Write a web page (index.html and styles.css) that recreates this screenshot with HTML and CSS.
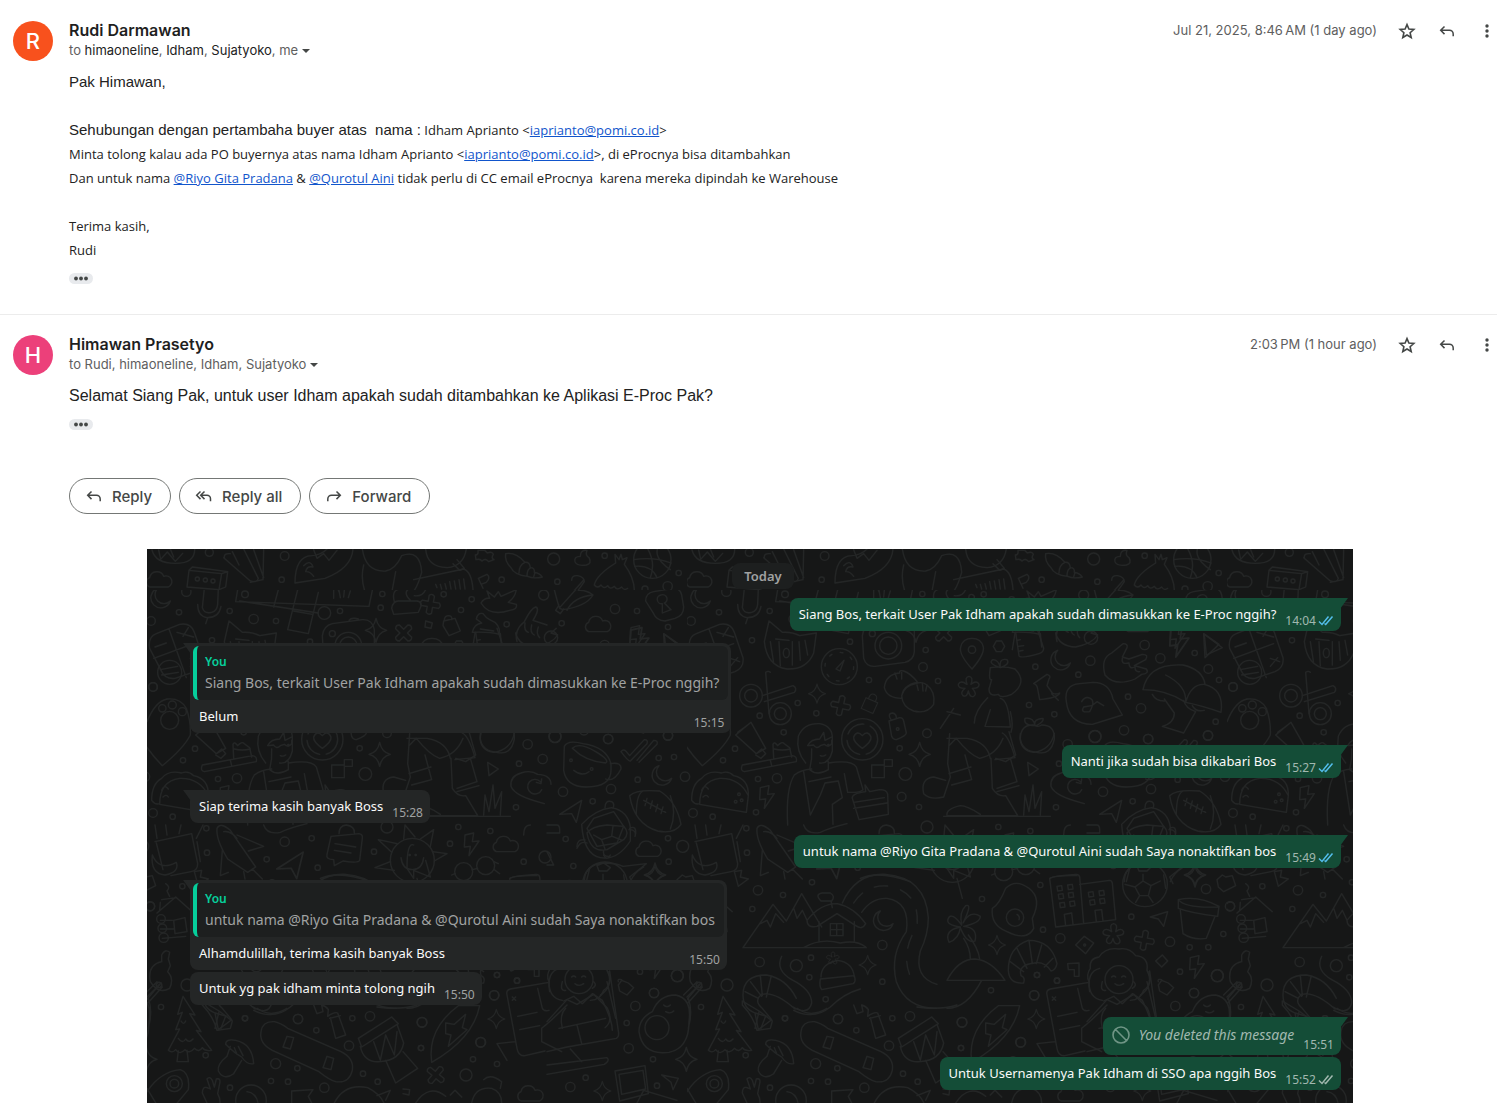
FILE: index.html
```html
<!DOCTYPE html>
<html lang="id">
<head>
    <meta charset="UTF-8">
    <meta name="viewport" content="width=device-width, initial-scale=1.0">
    <title>E-Proc Buyer</title>
    <link rel="stylesheet" href="styles.css">
</head>
<body>

<!-- shared icons -->
<svg class="sprite" aria-hidden="true">
    <symbol id="icon-star" viewBox="0 0 20 20">
        <path d="M10 3.6l1.9 4.5 4.9.4-3.7 3.2 1.1 4.8L10 14l-4.2 2.5 1.1-4.8-3.7-3.2 4.9-.4z" fill="none" stroke="currentColor" stroke-width="1.6"/>
    </symbol>
    <symbol id="icon-reply" viewBox="0 0 20 20">
        <path d="M7.5 5.5L3.7 9.3l3.8 3.8M4 9.3h8.5a3.7 3.7 0 0 1 3.7 3.7v2.3" fill="none" stroke="currentColor" stroke-width="1.5"/>
    </symbol>
    <symbol id="icon-reply-all" viewBox="0 0 20 20">
        <path d="M6.5 5.5L2.7 9.3l3.8 3.8M10.500 5.5L6.7 9.3l3.8 3.8M7 9.3h6a3.5 3.5 0 0 1 3.5 3.5v2.5" fill="none" stroke="currentColor" stroke-width="1.5"/>
    </symbol>
    <symbol id="icon-forward" viewBox="0 0 20 20">
        <path d="M12.500 5.5l3.8 3.8-3.8 3.8M16 9.3H7.5a3.7 3.7 0 0 0-3.7 3.7v2.3" fill="none" stroke="currentColor" stroke-width="1.5"/>
    </symbol>
    <symbol id="icon-more" viewBox="0 0 20 20">
        <g fill="currentColor"><circle cx="10" cy="5" r="1.7"/><circle cx="10" cy="10" r="1.7"/><circle cx="10" cy="15" r="1.7"/></g>
    </symbol>
    <symbol id="icon-dots" viewBox="0 0 24 11">
        <g fill="currentColor"><circle cx="7" cy="5.5" r="1.9"/><circle cx="12" cy="5.5" r="1.9"/><circle cx="17" cy="5.5" r="1.9"/></g>
    </symbol>
    <symbol id="icon-ticks" viewBox="0 0 16 11">
        <path d="M1 6.5l3 3L10.500 1.5M6.5 8.5l1.2 1L14.500 1.5" fill="none" stroke="currentColor" stroke-width="1.5"/>
    </symbol>
    <symbol id="icon-blocked" viewBox="0 0 18 18">
        <path d="M9 1a8 8 0 1 0 0 16a8 8 0 0 0 0-16zM3.3 3.3l11.400 11.400" fill="none" stroke="currentColor" stroke-width="1.6"/>
    </symbol>
</svg>

<main class="thread">
    <article class="mail">
        <div class="avatar avatar-orange">R</div>
        <div class="mail-main">
            <header class="mail-header">
                <div>
                    <h2>Rudi Darmawan</h2>
                    <p class="recipients">to <span class="strong">himaoneline</span>, <span class="strong">Idham</span>, <span class="strong">Sujatyoko</span>, me <button class="caret" aria-label="Show details"></button></p>
                </div>
                <div class="mail-tools">
                    <time>Jul 21, 2025, 8:46&#8239;AM (1 day ago)</time>
                    <button class="icon-button" aria-label="Star"><svg><use href="#icon-star"/></svg></button>
                    <button class="icon-button" aria-label="Reply"><svg><use href="#icon-reply"/></svg></button>
                    <button class="icon-button" aria-label="More"><svg><use href="#icon-more"/></svg></button>
                </div>
            </header>
            <div class="mail-body">
                <p class="arial">Pak Himawan,</p>
                <p><br></p>
                <p><span class="arial">Sehubungan dengan pertambaha buyer atas&nbsp; nama :</span> Idham Aprianto &lt;<a href="mailto:iaprianto@pomi.co.id">iaprianto@pomi.co.id</a>&gt;</p>
                <p>Minta tolong kalau ada PO buyernya atas nama Idham Aprianto &lt;<a href="mailto:iaprianto@pomi.co.id">iaprianto@pomi.co.id</a>&gt;, di eProcnya bisa ditambahkan</p>
                <p>Dan untuk nama <a href="#">@Riyo Gita Pradana</a> &amp; <a href="#">@Qurotul Aini</a> tidak perlu di CC email eProcnya&nbsp; karena mereka dipindah ke Warehouse</p>
                <p><br></p>
                <p>Terima kasih,</p>
                <p>Rudi</p>
            </div>
            <button class="trimmed" aria-label="Show trimmed content"><svg><use href="#icon-dots"/></svg></button>
        </div>
    </article>

    <article class="mail">
        <div class="avatar avatar-pink">H</div>
        <div class="mail-main">
            <header class="mail-header">
                <div>
                    <h2>Himawan Prasetyo</h2>
                    <p class="recipients">to Rudi, himaoneline, Idham, Sujatyoko <button class="caret" aria-label="Show details"></button></p>
                </div>
                <div class="mail-tools">
                    <time>2:03&#8239;PM (1 hour ago)</time>
                    <button class="icon-button" aria-label="Star"><svg><use href="#icon-star"/></svg></button>
                    <button class="icon-button" aria-label="Reply"><svg><use href="#icon-reply"/></svg></button>
                    <button class="icon-button" aria-label="More"><svg><use href="#icon-more"/></svg></button>
                </div>
            </header>
            <div class="mail-body">
                <p class="arial large">Selamat Siang Pak, untuk user Idham apakah sudah ditambahkan ke Aplikasi E-Proc Pak?</p>
            </div>
            <button class="trimmed" aria-label="Show trimmed content"><svg><use href="#icon-dots"/></svg></button>
            <div class="reply-bar">
                <button class="pill"><svg><use href="#icon-reply"/></svg>Reply</button>
                <button class="pill"><svg><use href="#icon-reply-all"/></svg>Reply all</button>
                <button class="pill"><svg><use href="#icon-forward"/></svg>Forward</button>
            </div>
        </div>
    </article>
</main>

<section class="chat">
    <svg class="wallpaper" aria-hidden="true">
        <defs>
            <path id="d-star" d="M0-36Q6-6 32 0Q6 6 0 36Q-6 6-32 0Q-6-6 0-36Z"/>
            <path id="d-moon" d="M-8-30A30 30 0 1 0 30 8A24 24 0 0 1-8-30Z"/>
            <path id="d-bolt" d="M-20-28L6-34 2-8 22-10-8 34-4 6-22 8Z"/>
            <path id="d-plus" d="M-8-26q8-8 16 0v18h18q8 8 0 16h-18v18q-8 8-16 0v-18h-18q-8-8 0-16h18z"/>
            <path id="d-cloud" d="M-28 20a15 15 0 0 1 0-28a22 22 0 0 1 42-4a17 17 0 0 1 14 32z"/>
            <path id="d-plane" d="M-34 10L32-32 16 34 2 8Z"/>
            <path id="d-lock" d="M-24-14h48v44h-48zM-14-14v-10a14 14 0 0 1 28 0v10"/>
            <path id="d-flower" d="M-6-8q-8-22 6-24q14 2 6 24q18-14 24 0q2 12-20 12q16 18 4 24q-12 4-16-16q-4 20-16 14q-10-8 6-22q-22 0-20-12q6-14 26 0z"/>
            <path id="d-tree" d="M0-90l36 56-16-4 34 54-14-4 46 60q-20 4-28-8q-10 16-24 2q-14 18-28 4q-16 18-28 0q-10 12-22 2l34-64-12 2 20-52-14 6zM-14 74l-4 32h34l-4-34M-6-16q8 14 14 0M-14 36q12 18 22 2q10 14 22 0"/>
            <clipPath id="top-strip"><path d="M0 0h1620v123H0z"/></clipPath>
            <clipPath id="below-strip"><path d="M-600 123h2900v1540H-600z"/></clipPath>

            <g id="doodles">
                <g clip-path="url(#top-strip)">
                    <g transform="translate(0 -12)">
                        <path d="M15 15q10 40 70 40t58-44M35 15l6 28 20-22 24 28 22-24M70 12l10 24"/>
                        <circle cx="187" cy="22" r="12"/><circle cx="413" cy="33" r="13"/><circle cx="404" cy="104" r="8"/><circle cx="1064" cy="104" r="8"/>
                        <use href="#d-cloud" x="36" y="106"/>
                        <path d="M126 76l98 10-8 48-96-8zM126 76l10-10 106 14-18 6M242 80l-6 46-20 8"/>
                        <circle cx="151" cy="102" r="6"/><circle cx="175" cy="105" r="6"/><circle cx="198" cy="108" r="6"/>
                        <path d="M230 38l80 70q20 6 24-8L290 12M350 98l-30-84M232 38q-2-14 18-12M310 112l38-8 2-90M276 60l-20-40"/>
                        <path d="M444 114q0-80 50-82q30-2 48-22M444 114l90-14q80-30 84-88M470 62q20-20 28 4q-18-4-22 14q12-2 24 14M500 14l10 26 20-14 16 20 24-30"/>
                        <path d="M646 12q10 70 70 66q30-6 48-46q56-20 60 50q-10 36-22 54M650 60q-10 40 4 80M746 80l-10 54M800 104l150-32q24 8 28 62"/>
                        <path d="M836 12q4 54 64 56q50-4 58-56M918 56l20 20 14-6-22-26M870 128l-4-10M884 132l-4-14M898 132l-4-16M912 132l-4-22M926 132l-4-24M940 132l-4-28M954 132l-4-30"/>
                        <path d="M985 30q10 0 8-14h20l8 8q14-6 18 4q-8 12 2 16l-16 6q-10-12-20-2q-6-8-18-4z"/>
                        <path d="M1076 26q30-6 58 26q14-2 16 16q14 0 12 14q16 2 24 14q-26 6-44-2q-40-4-50-26q-20-20-16-42zM1116 84q0-24 18-32M1140 94q0-22 12-26M1160 96l4-14"/>
                        <path d="M994 100l26-12q12 10-2 24l-16 6M994 100l14 30"/>
                    </g>
                    <g transform="translate(1200 -12)">
                        <circle cx="20" cy="42" r="18"/><circle cx="173" cy="32" r="8"/><circle cx="31" cy="110" r="8"/><circle cx="395" cy="84" r="8"/><circle cx="294" cy="132" r="9"/><circle cx="362" cy="124" r="14"/>
                        <path d="M84 50q-4-16 16-16q0-20 20-18q-6 16 6 22q10 18-8 22q-30 4-34-10z"/>
                        <path d="M142 120q6-30 64-66l-2-26 12 16 6-16 4 16 14-6-8 20q30 40 30 80M142 120q10 12 20 0q8 14 20 2q8 14 20 2q8 14 22 2q8 12 18 4"/>
                        <circle cx="316" cy="44" r="56"/>
                        <path d="M260 44q60-10 112 10M290-6q40 50 20 104M340-6q-30 40 30 80M264 64q50-4 66 34"/>
                        <path d="M74 106q0-16 18-14q20 4 20 18l-60 84M30 195l80-90"/>
                    </g>
                </g>

                <g clip-path="url(#below-strip)">
                    <g transform="translate(0 -12)">
                        <use href="#d-moon" x="40" y="160"/><use href="#d-star" x="687" y="256"/><use href="#d-plus" transform="translate(850 178) rotate(10)"/><use href="#d-plus" transform="translate(770 264) rotate(45)"/>
                        <circle cx="118" cy="140" r="14"/><circle cx="96" cy="202" r="8"/><circle cx="12" cy="228" r="13"/><circle cx="248" cy="198" r="8"/><circle cx="320" cy="222" r="14"/><circle cx="387" cy="228" r="8"/><circle cx="532" cy="204" r="19"/><circle cx="579" cy="198" r="8"/><circle cx="706" cy="147" r="8"/><circle cx="701" cy="188" r="8"/><circle cx="890" cy="148" r="8"/><circle cx="974" cy="163" r="8"/><circle cx="942" cy="195" r="8"/><circle cx="1079" cy="238" r="8"/><circle cx="1190" cy="150" r="15"/><circle cx="18" cy="426" r="13"/><circle cx="195" cy="286" r="8"/><circle cx="489" cy="290" r="8"/>
                        <path d="M172 130l-6 58q6 20 28 14q16-4 18-24l2-48M152 178q0 36 28 40q36 0 42-34M182 218l-6 18"/>
                        <path d="M272 134l-6 36 400 14 10-48M394 134l-14 52M278 168l236 36M514 142l-30 124-62-12 30-120M440 198l56 10"/><circle cx="294" cy="148" r="10"/>
                        <path d="M556 126q12-14 32-8q-20 6-12 22M560 136v24M576 136l4 22M592 136l-2 20M610 138l-6 20"/>
                        <path d="M734 190q4-22 20-22h56q14 2 12 16l-8 18-74 6zM742 170q-8-30 10-36M790 166q-20-20-8-32M836 134q-10 22-34 18"/>
                        <path d="M1002 174q10-16 26-14l-8-22 22 18 12-16 8 14 46-20q-4 24-24 38l24 6q4 16-20 18q-60 20-86-22z"/>
                        <path d="M836 228l20 6-4 16-18-4zM890 228l34-8 16 38-34 14-18-30zM892 226q0-14 14-14q10 2 8 12"/>
                        <path d="M976 262q4-24 28-28l-16-12q4-20 20-16q10 14 20 18q32 12 30 44q-30-8-82-6zM984 264l-8 50M1060 266l4 40M1000 252l40 6"/>
                        <path d="M1110 290q-10-34 22-60q20-40 34-44q14 4-8 40l42 14M1134 234q-4 24 10 28M1154 240q-6 24 8 30M1174 246q-8 20 4 32"/>
                        <path d="M8 310q-6-34 20-44l70-28q34-6 44 24l26 76q4 30-24 42l-60 20q-28 4-40-20zM66 252l52 146M20 340l120-44M90 262l50 14M108 274l16-26M24 306l34-12M130 340l28 10M130 364l22-26"/>
                        <circle cx="68" cy="382" r="36"/><path d="M40 374l52-10M44 390l50-8"/>
                        <path d="M232 290l14-62 40 34q30-2 52 10l50-8-8 60q-20 50-80 48q-60-8-68-82zM250 290l10 64M266 282l40 4M276 290l4 72M316 290v70M336 290l4 56M354 286l8 44"/><ellipse cx="298" cy="324" rx="9" ry="14"/>
                        <path d="M526 272q4-30 30-36l90-12q30-2 36 30v66q-2 26-28 32l-90 12q-26 2-34-24zM606 226q8-10 28-4"/><circle cx="604" cy="302" r="40"/><circle cx="604" cy="302" r="26"/><circle cx="556" cy="266" r="9"/>
                        <circle cx="457" cy="365" r="54"/><circle cx="457" cy="365" r="43" stroke-dasharray="8 26"/><path d="M447 372l24-26-12 32z"/>
                        <path d="M250 382q-6-6-14 0l10 124M226 452l92-30q14 8 4 20l-90 28"/><circle cx="192" cy="452" r="34"/><circle cx="192" cy="452" r="19"/><circle cx="280" cy="506" r="33"/><circle cx="280" cy="506" r="18"/>
                        <use href="#d-star" transform="translate(390 446) scale(.8)"/><use href="#d-plus" transform="translate(461 482) rotate(12)"/><use href="#d-lock" transform="translate(550 476) rotate(24) scale(.8)"/>
                        <path d="M592 428q4-40 46-44q-2-10 12-6q20 6 42 34q-48 8-48 48q-44 0-52-32zM644 452q8-30 42-36q20-8 34 4q26 20 20 58q-20 30-60 20q-34-12-36-46zM624 384l6 18M644 382v20M690 420l4 16M706 414l2 24M720 420l-4 18"/>
                        <path d="M146 570l46-38 44 78-28 16zM152 562l30-22M208 626l16-14 12 14-14 14-16-10"/>
                        <path d="M166 660l150-28q16 2 12 18l-156 30q-14-4-6-20zM260 640l-2-42q4-10 14 4q12-14 20-6l16 12 6 28M262 612q24 6 48 0M250 646l4 16"/>
                        <path d="M0 530q24-60 60-68q40-4 58 28q14 40 12 80-20 40-84 92-40-40-70-92"/><circle cx="68" cy="526" r="27"/><circle cx="46" cy="490" r="11"/><circle cx="76" cy="480" r="12"/><circle cx="106" cy="500" r="12"/>
                        <path d="M356 654q-30-36-22-80q16-40 64-38q40 8 38 46v36q-10 40-38 36M362 602q10-20 36-20l12-20 4 24 20-10M364 602l16-2q8 14 20 2l12-4q12 12 22-2v-10M374 612q2 30-6 62q24 20 56 0v-24M400 632q8 4 16-2"/><circle cx="424" cy="600" r="2"/>
                        <path d="M302 840q-6-110 20-150 20-16 52-18M424 654q70-10 84 12l20 68q-10 10-46 8l-10-56M350 680l20 130 30-60 14-36 40-6 12 50-30 20 2 60M366 710l66-14"/>
                        <path d="M496 760q-4-14 40-20l-2-20 14 20 30-6q22 0 24 14l2 60-88 16zM500 772l92-14M500 790l100-16"/>
                        <circle cx="526" cy="583" r="62"/><circle cx="526" cy="583" r="46" stroke-dasharray="60 20"/><path d="M526 610q-28-20-26-34q10-22 26-4q16-18 26 4q2 14-26 34z"/>
                        <path d="M606 528l32-10q10 0 12 10l8 36q0 8-30 20q-10 0-14-10zM612 524q-12-18 4-20q12 2 12 14"/><circle cx="632" cy="552" r="4"/>
                        <use href="#d-star" x="698" y="628"/><path d="M554 660h38v38h-38zM592 644h24v20h-24z"/>
                        <circle cx="655" cy="687" r="19"/><circle cx="638" cy="610" r="8"/><circle cx="644" cy="755" r="13"/><circle cx="696" cy="786" r="8"/><circle cx="546" cy="405" r="8"/><circle cx="708" cy="366" r="13"/><circle cx="716" cy="315" r="8"/><circle cx="753" cy="408" r="8"/><circle cx="720" cy="565" r="13"/>
                        <circle cx="144" cy="611" r="8"/><circle cx="108" cy="646" r="8"/><circle cx="213" cy="702" r="8"/><circle cx="270" cy="700" r="14"/><circle cx="332" cy="474" r="8"/><circle cx="388" cy="505" r="8"/><circle cx="218" cy="512" r="8"/><circle cx="290" cy="562" r="8"/><circle cx="18" cy="804" r="13"/><circle cx="77" cy="815" r="8"/><circle cx="207" cy="802" r="8"/>
                        <path d="M14 766q0-50 30-66q20-26 60-16q20-8 36 8q46 10 44 60l-6 50-140-24q0-70 60-78q60-2 86 52M14 766q10 14 24 10M44 736q8-20 20-4M48 756q10-10 16 0"/><circle cx="146" cy="770" r="4"/><circle cx="164" cy="766" r="4"/><circle cx="156" cy="748" r="4"/>
                        <use href="#d-bolt" x="240" y="756"/>
                        <path d="M788 566l-6 90 8 40-20 60q-40 10-60-10-10-46 30-50l36 10M788 600l20-20q40 50 70 60 50-10 70-60M834 630l20 74-60 16M912 640l4 90q16 26 40 22l36 60H780q-4-20 40-30 20 0 60 26M970 640l20 70-60 20M930 740l66-18M786 686l66-20M946 564q20 10 38 74l-60 6"/>
                        <path d="M770 814h320M1010 810l4-60 12 50 12-80 6 70 20-50-4 70"/><path d="M1022 652l32 20-28 20z"/>
                        <path d="M1000 566q-6 50 40 56q50-6 62-56M1092 724q-4-30 30-40q30-10 50 4q40 2 40 30M1092 724q10 30 100 52"/><circle cx="1142" cy="598" r="14"/><circle cx="1116" cy="656" r="8"/><circle cx="1187" cy="642" r="14"/><circle cx="1107" cy="787" r="8"/>
                        <path d="M1180 710a22 22 0 1 0 4 24M1184 702l-2 14-14-4"/>
                    </g>
                    <g transform="translate(1200 -12)">
                        <path d="M22 134q10 40 16 56l10 4q70-10 90-44-20-16-44-14M38 188l50-56M36 180l-10 16 14 10 10-14M60 196q20-40 76-46"/>
                        <path d="M296 168q0-24 24-28l60-10q20 0 24 20l6 36q0 26-26 34l-30 8q-26-2-34-22zM342 150a12 12 0 0 1 10 24l20 20-26 10v-28a12 12 0 0 1-4-26z"/>
                        <use href="#d-cloud" x="153" y="240"/><use href="#d-bolt" x="272" y="276"/><path d="M350 266l46 32-42 40z"/>
                        <circle cx="204" cy="192" r="14"/><circle cx="270" cy="198" r="8"/><circle cx="44" cy="235" r="8"/><circle cx="363" cy="246" r="8"/><circle cx="12" cy="278" r="20"/>
                        <path d="M52 604q10-20 56-8q70 10 84 60v20q0 50-74 50-60 0-68-50zM76 610q20-20 70 10q44 26 30 34q-60-4-100-44zM190 656q34-6 32 16q-20 40-46 30M80 676q24 20 46 4"/><circle cx="72" cy="646" r="4"/><circle cx="134" cy="672" r="4"/>
                        <path d="M222 620q8-10 16 0l10 12 44-48q12 0 8 12l-50 52q-6 2-28-28M270 646l50-60q14 0 10 12l-54 54"/>
                        <use href="#d-moon" x="344" y="692"/><circle cx="24" cy="575" r="18"/><circle cx="184" cy="582" r="14"/><circle cx="363" cy="572" r="14"/><circle cx="335" cy="639" r="8"/><circle cx="381" cy="636" r="8"/><circle cx="414" cy="695" r="14"/><circle cx="272" cy="704" r="8"/><circle cx="48" cy="740" r="14"/><circle cx="192" cy="732" r="14"/><circle cx="137" cy="769" r="8"/>
                        <path d="M248 752q20-20 90-14 50 30 64 100-20 30-70 20-70-20-84-106zM288 738q-20 10-20 70M370 752q20 50 0 100M290 766l66 36M300 760l-6 22M316 768l-6 22M332 778l-6 22M348 786l-6 20"/>
                        <use href="#d-plane" x="72" y="798"/>
                        <path d="M104 838q40-44 90-50 50 10 56 60v40q-40 60-90 50-50-10-56-100zM174 788q0-24 20-18q10 6 4 20M120 850l20-30 60-20 30 44-20 50-60 10zM90 905q0-24 24-20M248 850q20-10 18 16M170 930q10 20 20 0"/>
                    </g>
                    <g transform="translate(780 -12)">
                        <path d="M75 372q-40-44-34-66q6-26 34-26t34 26q4 22-34 66z"/><circle cx="75" cy="314" r="11"/>
                        <path d="M148 288h16l9 16-9 16h-16l-9-16z"/><path d="M206 262l10 70q4 10 60-6 14-4 14-16l-20-60M210 286l10-2M214 304l16-2M218 318l10-2"/>
                        <use href="#d-moon" x="340" y="346"/><circle cx="430" cy="347" r="14"/><circle cx="394" cy="389" r="8"/><circle cx="265" cy="365" r="8"/><circle cx="593" cy="300" r="14"/><circle cx="640" cy="340" r="14"/><circle cx="743" cy="324" r="8"/><circle cx="784" cy="372" r="13"/><circle cx="246" cy="480" r="8"/><circle cx="322" cy="508" r="8"/><circle cx="543" cy="455" r="8"/><circle cx="582" cy="490" r="14"/><circle cx="531" cy="556" r="14"/><circle cx="603" cy="582" r="14"/><circle cx="444" cy="574" r="18"/><circle cx="816" cy="405" r="8"/><circle cx="858" cy="426" r="13"/><circle cx="806" cy="530" r="8"/><circle cx="783" cy="571" r="14"/>
                        <path d="M326 264q10 40 60 42q50-10 66-36l-20-6 16-14"/>
                        <path d="M474 390q-14-50 20-66l34-28q16 0 12 12l-14 28 20 6 40-14q20 0 10 16l-34 18 36 10q10 14-14 16l-20 14q-60 24-90-12zM526 340q-4 20 20 14q0 20 18 12q0 16 14 14"/>
                        <use href="#d-bolt" transform="translate(697 292) scale(1.3)"/><path d="M772 268l54 40-48 22z"/>
                        <path d="M588 434q16-80 120-74 60 14 66 58M588 434q70 0 128 38q4-50-60-82M716 472q50 10 106 30 10-70-50-84-40-2-56 54M616 448q10 20 36 20M652 462l30 42q0 30-36 40l64 20 36-64q-30-10-36-34M736 482q10 20 36 14"/>
                        <path d="M358 470q-8-50 40-54l40-4q50 0 60 50l28 48-90 28q-70 0-78-68zM404 470q10-18 26-10t-2 40q-30 4-18-14l24-4 16-12 20 12"/>
                        <path d="M260 416l40-28q14 4 6 14l-6 20 16 22q10 6 22 0-4 14-60 20l-6-32q-2-14-12-16zM314 446l20 20"/>
                        <use href="#d-flower" x="66" y="426"/>
                        <path d="M130 368q-6 40 4 36l-8 28q0 24 28 16 6 14 40 0 50-36 10-76-30-10-74-4zM160 368q-40-14-22-24q16 0 22 24q-4-30 20-24q10 14-20 24M122 458q-40 40-40 76M160 460q24 4 30 86l-76-2 16-50M190 500q10 40 2 62M60 580q60 10 70 60M186 560l20 70-30 20-30-10M0 500l40 10M20 490l-40 60M60 580H0"/>
                        <path d="M220 582q0-44 40-42 12 8 24 0 40 0 38 42-10 50-52 40-44-4-50-40zM264 542q-6-20 24-22q4 10-20 22q-40 0-34-22q24-4 30 20"/>
                    </g>

                    <g transform="translate(0 828)">
                        <path d="M24 50l110-24 18 90q0 20-20 24l-60 12M28 54l20 80M150 50l10 60M30 40l-6-40M60 30l-4-30M96 26l6-26M16 90q20 50 72 22 10 30-34 38-44-4-38-60z"/>
                        <path d="M210 10q10-20 40 6l76 110-24 16-60-40q-36-60-32-92zM226 76l-6 76 24-10M270 30l80 34-46 14M290 140l4 22M316 132l30 30M230 20q20-4 40 20"/>
                        <use href="#d-plane" transform="translate(430 120) scale(1.2)"/><circle cx="413" cy="50" r="14"/><circle cx="494" cy="40" r="8"/><circle cx="359" cy="103" r="8"/><circle cx="512" cy="128" r="8"/><circle cx="681" cy="80" r="8"/><circle cx="178" cy="10" r="8"/><circle cx="180" cy="83" r="8"/><circle cx="720" cy="6" r="18"/><circle cx="909" cy="56" r="8"/><circle cx="934" cy="6" r="8"/><circle cx="1030" cy="18" r="8"/><circle cx="1130" cy="110" r="8"/><circle cx="1194" cy="96" r="18"/><circle cx="106" cy="184" r="8"/><circle cx="10" cy="244" r="13"/>
                        <path d="M552 34l84-8q12 2 10 14l-8 66q-4 10-50 2l-26 14-2-18q-24 0-20-16zM576 26q0-24 22-26q26 4 24 24M564 56l62 10M562 76l50 8"/>
                        <circle cx="796" cy="106" r="66"/><path d="M762 98q4 36 34 36t34-36M770 42l4-42 30 36M820 42l40-28-10 50M856 80l44 6-38 22M734 82l-40-38 56 12M730 110l-46 18 58 8"/><circle cx="788" cy="90" r="2"/><circle cx="806" cy="90" r="2"/>
                        <use href="#d-bolt" x="974" y="58"/><use href="#d-cloud" x="1076" y="60"/><circle cx="950" cy="140" r="27"/><circle cx="1016" cy="122" r="27"/><path d="M976 134l16-4M1040 110l14 6M1042 134l16 12M924 146l-10 4"/>
                        <path d="M142 140l22-4-4 20 24 6-30 22zM520 160q60-24 150 10M350 0q10 30 50 22q30-14 80-26M1130 30q0-30 20-30M1090 160q10-10 80-8"/>
                        <path d="M56 176q16 10 4 22l8 16M30 264l56-48 50 44M44 224l44-6M40 232l-2 24M80 286l34-8 6 42-36 6zM40 286h36M40 312h40M46 340l70-6"/><circle cx="42" cy="282" r="13"/><circle cx="46" cy="310" r="13"/><circle cx="50" cy="338" r="14"/>
                        <path d="M10 470q-10-50 34-60v-20q10-20 24-8l-4 20 6 20-8 18q20 20 6 50-34 20-58-20zM36 480l-50 60M46 486l-54 60"/><circle cx="36" cy="480" r="8"/><circle cx="120" cy="480" r="18"/>
                        <use href="#d-tree" x="108" y="604"/>
                        <path d="M166 528l50 30 40 30-6 22-40 6q-10-40-44-76zM216 560l-12 50M236 574l-14 36"/><circle cx="42" cy="546" r="8"/><circle cx="176" cy="691" r="8"/><circle cx="294" cy="580" r="8"/>
                        <path d="M236 658q0-18 30-12 50 10 54 70-20 4-36-20-20-10-48-38zM250 664l-10 30q-30 24-26 44 16 30 46 8l24-40M262 668l8 20M274 664l14 28"/>
                        <path d="M342 620q4-32 40-30 20 4 40 20l160 70q40 20 34 56-10 40-50 34-20-6-50-30l-140-64q-40-20-34-56zM420 634l20 4-10 34-22-6zM540 694l20 6-8 34-24-6z"/>
                        <circle cx="386" cy="716" r="15"/><circle cx="453" cy="582" r="14"/><circle cx="508" cy="616" r="8"/><circle cx="606" cy="662" r="14"/><circle cx="669" cy="574" r="14"/><circle cx="616" cy="580" r="8"/><circle cx="451" cy="730" r="8"/><circle cx="532" cy="788" r="14"/><circle cx="648" cy="746" r="8"/><circle cx="692" cy="770" r="8"/><circle cx="822" cy="669" r="8"/><circle cx="825" cy="592" r="14"/><circle cx="372" cy="768" r="8"/><circle cx="423" cy="770" r="8"/><circle cx="249" cy="788" r="8"/>
                        <path d="M500 540l10 26 18-6-4-20q14 4 20 14l-2 20q20-14 30-10l24 66-30 10-16-62M548 580l32-8M330 550q40 30 90 0M690 546q70 10 120-6"/>
                        <path d="M634 640l100-64 20 20-110 70zM640 664q10 50 60 46 60-4 70-56l-20-56M680 650l20 56 16-76 26 60 8-70M716 706l30 68 66-44-44-50"/>
                        <path d="M854 712q-14-100 80-170h64q-20 100-144 170zM896 594l26 4 34-30-10 40 14 6-56 50 8-34-16-4z"/>
                        <use href="#d-plus" transform="translate(866 750) rotate(40)"/><circle cx="957" cy="750" r="18"/><circle cx="978" cy="703" r="8"/><circle cx="1001" cy="652" r="14"/><circle cx="1050" cy="717" r="8"/><circle cx="1042" cy="511" r="14"/><circle cx="1050" cy="450" r="8"/><circle cx="1110" cy="467" r="8"/><use href="#d-star" transform="translate(1048 582) scale(.8)"/>
                        <path d="M0 800q40-60 100-66 30 10 24 60l-50 60M0 790l30 50"/><circle cx="82" cy="776" r="24"/><circle cx="82" cy="776" r="13"/>
                        <path d="M180 834l-14-30q0-20 14-16l10 4-10-30q8-10 16 4l6 20 6-24q14-4 10 14l-6 30q16 30-4 50"/><circle cx="312" cy="826" r="46"/><path d="M300 800q30 4 34 40M434 834v-36l64-4-14 20 10 20M562 834q30-60 100-46 40 20 50 50M690 812l40-16-14 30M768 792l20 2-2 16-18-4M806 834q40-60 90-20M910 810l14-14 20 20M974 834q10-50 60-44 30 10 30 44M1010 764q20-20 54 6l-4 20"/><use href="#d-cloud" x="1150" y="808"/>
                    </g>
                    <g transform="translate(1200 828)">
                        <path d="M588 0l-20 40M120 24q14-20 60-24l50 4q20 20 0 40l-50 30q-50 10-60-50zM90 70q10-24 30-16M246 14q24 0 18 20M170 76q-4 20 18 18M140 30l24 14 10 28M164 44l30-10 4-30M196 34l30 12"/><use href="#d-cloud" x="304" y="74"/>
                        <circle cx="56" cy="42" r="8"/><circle cx="79" cy="123" r="8"/><circle cx="363" cy="40" r="8"/><circle cx="407" cy="64" r="18"/><circle cx="365" cy="110" r="8"/><path d="M0 0h30q10 0 8 24H0M0 120l20 0-20-40M112 170q0-50 56-56 40 0 60 10l70-8-50 40 10 20M150 122l20-8 20 14-10 10h-24z"/><use href="#d-star" x="324" y="150"/>
                        <path d="M0 680l60-14 148-26q10-6 6-22l-26-180M0 590l60-66 30 14 50-30 40 40q20 40-6 60M36 610l140-30M90 600l14 56M46 610q-10-40 10-60M8 500q-10-60 30-70M186 440q10 50-26 70"/><circle cx="96" cy="464" r="42"/><path d="M84 476q12 10 26 0M74 456q6-6 12 0M104 456q6-6 12 0"/>
                        <path d="M0 720l180-22q10 8-8 20L0 748M70 672l34 38"/>
                        <path d="M214 480l10-14 20 8 16 14-20 22-22-12zM214 470q-4-10 10-6"/><circle cx="321" cy="504" r="14"/><circle cx="265" cy="543" r="14"/><circle cx="391" cy="452" r="18"/><circle cx="239" cy="594" r="8"/><circle cx="245" cy="670" r="14"/><circle cx="318" cy="703" r="8"/><circle cx="116" cy="758" r="8"/><circle cx="70" cy="786" r="14"/><circle cx="330" cy="782" r="8"/>
                        <path d="M276 620q0-40 40-60 20-50 70-50 50 10 40 80 0 80-60 92-80 10-90-62zM424 520q14 40 0 90M350 540q10 10 20 0M356 560q14 8 24-2M410 510l40-40M420 516l40-40"/><circle cx="330" cy="608" r="36"/><circle cx="456" cy="480" r="8"/>
                        <use href="#d-star" x="418" y="703"/><use href="#d-star" transform="translate(166 798) scale(.8)"/>
                        <path d="M204 738l90-16 10 84-86 22zM216 748l72-12 8 56-72 16zM270 834l20-38 100 30"/><path d="M344 750l50 10-16 34-6-22z"/>
                    </g>
                    <g transform="translate(780 828)">
                        <path d="M136 250q20-10 40-60 30-30 70 0 40 30 10 90l4 30q-20 40-80 10-50-20-44-70z"/><circle cx="204" cy="278" r="26"/><path d="M210 268q10 6 6 16"/>
                        <path d="M308 160q0-6 80-12 8 0 10 8l12 140-84 10zM398 178l90-12q6 0 8 8l10 110-96 12M356 302l-4-34 22-4 4 34M448 290l-4-34 20-2 4 34M330 184l14-2 2 14-14 2zM362 180l14-2 2 14-14 2zM334 208l14-2 2 14-14 2zM364 204l14-2 2 14-14 2zM338 234l14-2 2 14-14 2zM368 230l14-2 2 14-14 2zM424 202l14-2 2 14-14 2zM456 198l14-2 2 14-14 2zM428 226l14-2 2 14-14 2zM458 222l14-2 2 14-14 2z"/>
                        <circle cx="594" cy="178" r="67"/><path d="M588 168l24 14-8 30h-26l-14-26zM588 168v-20M564 186l-30-8M578 212l-12 20M604 212l14 20M612 182l28-14M548 130l-10 40M650 150l6 40M670 170q10-26 40-44"/>
                        <use href="#d-star" transform="translate(744 152) scale(.8)"/><path d="M810 164l16-14 10 6 20-4 10 30-36 18-16-14z"/><circle cx="777" cy="192" r="14"/><circle cx="849" cy="244" r="14"/><circle cx="829" cy="327" r="8"/>
                        <path d="M694 224q60-14 122 20l-4 30q-80-10-118-24zM694 224q20 26 118 22M700 256l8 70q30 20 70 14l26-66"/>
                        <path d="M610 276l52-16-12 44-16-22z"/><use href="#d-flower" x="500" y="328"/><use href="#d-plus" transform="translate(592 346) rotate(10)"/><circle cx="553" cy="275" r="8"/><circle cx="288" cy="314" r="8"/><circle cx="340" cy="340" r="14"/><circle cx="280" cy="180" r="8"/><circle cx="669" cy="350" r="14"/><circle cx="728" cy="367" r="8"/><circle cx="784" cy="367" r="8"/><circle cx="105" cy="222" r="8"/><use href="#d-star" transform="translate(150 360) scale(.8)"/>
                        <path d="M386 360l26-26 28 20-24 32zM362 416l34-2v40h-14v-20h-18z"/><circle cx="413" cy="360" r="3"/>
                        <path d="M184 436q0-70 60-90 70 0 86 70-4 20-18 22-20-30-50-24-50 6-40 38 14 6 8 22-44 4-46-38zM246 346l10 70M284 360l-16 56M210 370l30 60M190 410l40 30M318 400l-26 26"/>
                        <circle cx="270" cy="450" r="8"/><circle cx="330" cy="467" r="8"/><circle cx="132" cy="496" r="8"/><circle cx="261" cy="511" r="14"/><circle cx="45" cy="592" r="15"/><circle cx="221" cy="652" r="15"/><circle cx="42" cy="669" r="8"/><circle cx="699" cy="440" r="8"/><circle cx="741" cy="504" r="14"/><circle cx="811" cy="452" r="18"/><path d="M626 408l20-18 16 18-18 18z"/><use href="#d-bolt" x="750" y="426"/>
                        <path d="M0 466h174q-40-60-90-64-50 0-84 64zM64 330q30 40 34 72M50 340q20 30 20 62M44 300q-30-40-40-20t36 26q-50 10-34 46 30-10 34-44 20 50 44 40 10-40-34-44 50-10 50-30-30-20-52 20 30-60 8-52-20 20-12 58M0 550q60 0 104-84"/>
                        <path d="M300 510q-4-14 10-18l116-20M300 510l30 160q4 24 24 22l60-14M392 490l14 60q4 10 20 6M332 574l58-12M338 614l60-12M270 656l56-6M270 656l30 50"/><path d="M316 516l10 10M326 516l-10 10"/>
                        <path d="M426 470q-10-20 4-40-4-30 26-34 20-30 60-24 30-6 50 20 40 4 34 44 20 40-10 60-10 30-40 30M426 470q0 50 40 56M466 470q-8 30 10 26M560 470q12 10-4 20M470 528l30-14 26 22 30-30 30 20q30 60 30 90M480 540q-50 50-76 70v40l60 30M600 470l26 110"/>
                        <path d="M20 60q-20-10-20 70l20 30 0-24 50 20-14-50M46 220l-16-60"/>
                    </g>
                    <!-- mountains, cabin and winding road -->
                    <g transform="translate(-420 828)">
                        <path d="M588 368l90-130 40 50 46-82 60 100M640 296l20-10 10 20 16-40 24 26M740 250l10 30 16-24 14 30M588 368h370M816 290v58M922 290v58M780 286q40-50 90-50 50 10 86 60-10 20-30 6l-56-36-60 38q-30 6-30-18zM822 228h30l4 20M822 228q-20-20 4-24h24q16 10 4 24M770 368q50-30 110-14 50-10 76 12M850 296h38v36h-38zM869 296v36M850 314h38"/>
                        <path d="M886 234q40-90 130-86 120 10 128 130 0 50-24 100-20 80 50 100M944 262q30-44 76-42 70 10 58 100-50 70-30 150 30 80 120 80"/><path d="M920 234q40-60 110-50 90 20 80 120-50 80-20 150" stroke-dasharray="40 40"/><use href="#d-moon" transform="translate(1008 288)"/>
                        <circle cx="633" cy="196" r="14"/><circle cx="708" cy="210" r="8"/><circle cx="795" cy="172" r="8"/><circle cx="616" cy="252" r="8"/><circle cx="1006" cy="360" r="14"/><circle cx="638" cy="411" r="14"/><circle cx="748" cy="422" r="18"/><circle cx="792" cy="398" r="8"/><circle cx="787" cy="457" r="8"/><circle cx="836" cy="523" r="8"/><circle cx="873" cy="582" r="14"/><circle cx="714" cy="580" r="8"/><circle cx="1006" cy="470" r="8"/>
                        <path d="M822 456q0-40 50-50 46 6 50 50M820 462l102-10q6 20-4 24l-94 18q-8-10-4-32z"/><use href="#d-flower" transform="translate(858 400) scale(.6)"/><use href="#d-star" transform="translate(962 420) scale(.8)"/>
                        <path d="M588 510q0-60 70-60 60 10 90 70M588 510q0 40 36 54l10 50 40-30-30-36q-24-20 0-40 40-10 100 44M624 564l36 10M640 452l6 60M672 456l-14 60M610 470l34 44M594 500l40 20M704 394q-20 40 30 70 60 30 60 70-10 40-60 10M740 556q60 30 110-10 40-40 90-54"/>
                    </g>
                </g>
            </g>

            <pattern id="doodle-tile" width="1620" height="1662" patternUnits="userSpaceOnUse" patternTransform="scale(.33333)">
                <g class="doodle-lines">
                    <use href="#doodles"/>
                    <use href="#doodles" x="-1620"/>
                </g>
            </pattern>
        </defs>
        <rect width="100%" height="100%" fill="url(#doodle-tile)"/>
    </svg>

    <div class="messages">
        <span class="day">Today</span>

        <div class="bubble out tail">
            <div class="bubble-row">
                <p>Siang Bos, terkait User Pak Idham apakah sudah dimasukkan ke E-Proc nggih?</p>
                <span class="meta">14:04 <svg class="ticks read"><use href="#icon-ticks"/></svg></span>
            </div>
        </div>

        <div class="bubble in tail">
            <blockquote>
                <b>You</b>
                <p>Siang Bos, terkait User Pak Idham apakah sudah dimasukkan ke E-Proc nggih?</p>
            </blockquote>
            <div class="bubble-row">
                <p>Belum</p>
                <span class="meta">15:15</span>
            </div>
        </div>

        <div class="bubble out tail">
            <div class="bubble-row">
                <p>Nanti jika sudah bisa dikabari Bos</p>
                <span class="meta">15:27 <svg class="ticks read"><use href="#icon-ticks"/></svg></span>
            </div>
        </div>

        <div class="bubble in tail">
            <div class="bubble-row">
                <p>Siap terima kasih banyak Boss</p>
                <span class="meta">15:28</span>
            </div>
        </div>

        <div class="bubble out tail">
            <div class="bubble-row">
                <p>untuk nama @Riyo Gita Pradana &amp; @Qurotul Aini sudah Saya nonaktifkan bos</p>
                <span class="meta">15:49 <svg class="ticks read"><use href="#icon-ticks"/></svg></span>
            </div>
        </div>

        <div class="bubble in tail">
            <blockquote>
                <b>You</b>
                <p>untuk nama @Riyo Gita Pradana &amp; @Qurotul Aini sudah Saya nonaktifkan bos</p>
            </blockquote>
            <div class="bubble-row">
                <p>Alhamdulillah, terima kasih banyak Boss</p>
                <span class="meta">15:50</span>
            </div>
        </div>

        <div class="bubble in">
            <div class="bubble-row">
                <p>Untuk yg pak idham minta tolong ngih</p>
                <span class="meta">15:50</span>
            </div>
        </div>

        <div class="bubble out tail deleted">
            <div class="bubble-row">
                <svg class="blocked"><use href="#icon-blocked"/></svg>
                <p>You deleted this message</p>
                <span class="meta">15:51</span>
            </div>
        </div>

        <div class="bubble out">
            <div class="bubble-row">
                <p>Untuk Usernamenya Pak Idham di SSO apa nggih Bos</p>
                <span class="meta">15:52 <svg class="ticks"><use href="#icon-ticks"/></svg></span>
            </div>
        </div>
    </div>
</section>

</body>
</html>
```
FILE: styles.css
```css
* {
    box-sizing: border-box;
}
body {
    margin: 0;
    background: #fff;
    color: #222;
    font-family: Inter, "Liberation Sans", sans-serif;
    font-size: 13px;
}
h2, p, blockquote {
    margin: 0;
}
button {
    padding: 0;
    border: none;
    background: none;
    font: inherit;
    color: #444746;
    cursor: pointer;
}
svg {
    display: block;
}
.sprite {
    position: absolute;
    width: 0;
    height: 0;
}

/* mail thread */
.thread {
    margin-right: 8px;
}
.mail {
    display: flex;
    gap: 16px;
    padding: 19px 0 30px 13px;
    border-top: 1px solid #ececec;
}
.mail:first-child {
    border-top-color: transparent;
}
.mail:last-child {
    padding-bottom: 35px;
}
.avatar {
    flex: none;
    width: 40px;
    height: 40px;
    margin-top: 1px;
    border-radius: 50%;
    color: #fff;
    font-size: 22px;
    font-weight: 500;
    line-height: 40px;
    text-align: center;
}
.avatar-orange {
    background: #f8511d;
}
.avatar-pink {
    background: #ec407a;
}
.mail-main {
    flex: 1;
}
.mail-header {
    display: flex;
    justify-content: space-between;
    align-items: flex-start;
    margin-bottom: 10px;
}
h2 {
    color: #1f1f1f;
    font-size: 16px;
    font-weight: 600;
    line-height: 20px;
}
.recipients {
    color: #5e5e5e;
    line-height: 20px;
}
.recipients .strong {
    color: #222;
}
.caret {
    border: 4px solid transparent;
    border-top-color: #444746;
    border-bottom: none;
    vertical-align: middle;
}
.mail-tools {
    display: flex;
    align-items: flex-start;
    gap: 20px;
    color: #5e5e5e;
    line-height: 20px;
}
.icon-button {
    margin-top: 1px;
}
.icon-button svg {
    width: 20px;
    height: 20px;
}
.mail-body {
    font-family: "Open Sans", sans-serif;
    line-height: 24px;
}
.mail-body p {
    height: 24px;
}
.mail-body a {
    color: #15c;
}
.arial {
    font-family: "Liberation Sans", Arial, sans-serif;
    font-size: 15px;
}
.large {
    font-size: 16px;
}
.trimmed {
    display: block;
    margin-top: 11px;
    border-radius: 6px;
    background: #e8eaed;
}
.trimmed svg {
    width: 24px;
    height: 11px;
}
.reply-bar {
    display: flex;
    gap: 8px;
    margin-top: 48px;
}
.pill {
    display: flex;
    align-items: center;
    gap: 8px;
    height: 36px;
    padding: 0 18px 0 14px;
    border: 1px solid #747775;
    border-radius: 18px;
    font-size: 15px;
    font-weight: 500;
}
.pill svg {
    width: 20px;
    height: 20px;
}

/* chat */
.chat {
    position: relative;
    margin: 0 152px 0 147px;
    background: #161717;
    font-family: "Noto Sans", "Open Sans", sans-serif;
    overflow: hidden;
}
.wallpaper {
    position: absolute;
    width: 100%;
    height: 100%;
}
.doodle-lines {
    fill: none;
    stroke: #242626;
    stroke-width: 4;
    stroke-linejoin: round;
    stroke-linecap: round;
}
.messages {
    position: relative;
    display: flex;
    flex-direction: column;
    align-items: flex-start;
    padding: 14px 12px 13px 43px;
}
.day {
    align-self: center;
    margin-right: 5px;
    margin-bottom: -3px;
    padding: 0 12px;
    border-radius: 8px;
    background: #1d1f1f;
    color: #a0a2a2;
    font-weight: 600;
    line-height: 26px;
}
.bubble {
    position: relative;
    margin-top: 2px;
    border-radius: 8px;
    color: #fafafa;
}
.tail {
    margin-top: 12px;
}
.tail::before {
    content: "";
    position: absolute;
    top: 0;
    width: 8px;
    height: 11px;
    background: inherit;
}
.in {
    background: #242626;
}
.in.tail {
    border-top-left-radius: 0;
}
.in.tail::before {
    left: -7px;
    clip-path: polygon(0 0, 100% 0, 100% 100%);
}
.out {
    align-self: flex-end;
    background: #144d37;
}
.out.tail {
    border-top-right-radius: 0;
}
.out.tail::before {
    right: -7px;
    clip-path: polygon(0 0, 100% 0, 0 100%);
}
.bubble-row {
    display: flex;
    align-items: flex-end;
    gap: 9px;
    padding: 7px 7px 3px 9px;
    line-height: 19px;
}
.bubble-row p {
    margin-bottom: 4px;
}
.meta {
    display: flex;
    align-items: center;
    gap: 2px;
    margin-left: auto;
    color: #a0a2a2;
    font-size: 12px;
    line-height: 15px;
}
.out .meta {
    color: #a1b8af;
}
.ticks {
    width: 16px;
    height: 11px;
}
.meta .read {
    color: #53bdeb;
}
blockquote {
    margin: 0 3px;
    padding: 6px 9px 6px 8px;
    border-left: 4px solid #06cf9c;
    border-radius: 6px;
    background: #1d1f1f;
    color: #a0a2a2;
    font-size: 14px;
    line-height: 22px;
}
.bubble:has(blockquote) {
    padding-top: 3px;
}
blockquote b {
    display: block;
    color: #06cf9c;
    font-size: 12px;
    font-weight: 600;
    line-height: 20px;
}
.blocked {
    width: 18px;
    height: 18px;
    margin-bottom: 8px;
    color: #6f9585;
}
.deleted .bubble-row {
    padding-top: 8px;
}
.deleted p {
    margin-bottom: 8px;
    color: #a1b8af;
    font-size: 14px;
    font-style: italic;
}
```
